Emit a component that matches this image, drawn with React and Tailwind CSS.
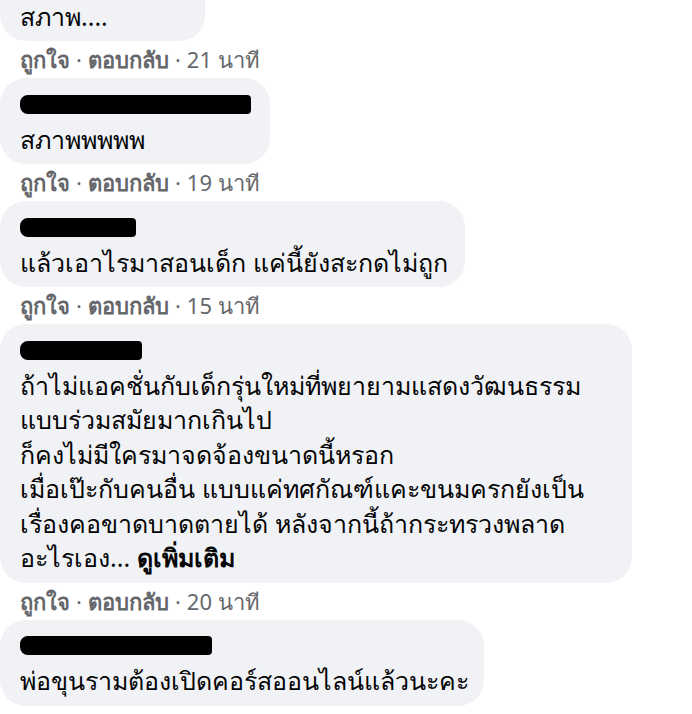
const comments = [
  { width: "w-[205px]", bar: "w-[180px]", lines: ["สภาพ...."], time: "21 นาที" },
  { width: "w-[270px]", bar: "w-[231px]", lines: ["สภาพพพพพ"], time: "19 นาที" },
  { width: "w-[465px]", bar: "w-[116px]", lines: ["แล้วเอาไรมาสอนเด็ก แค่นี้ยังสะกดไม่ถูก"], time: "15 นาที" },
  {
    width: "w-[632px]",
    bar: "w-[122px]",
    lines: [
      "ถ้าไม่แอคชั่นกับเด็กรุ่นใหม่ที่พยายามแสดงวัฒนธรรม",
      "แบบร่วมสมัยมากเกินไป",
      "ก็คงไม่มีใครมาจดจ้องขนาดนี้หรอก",
      "เมื่อเป๊ะกับคนอื่น แบบแค่ทศกัณฑ์แคะขนมครกยังเป็น",
      "เรื่องคอขาดบาดตายได้ หลังจากนี้ถ้ากระทรวงพลาด",
    ],
    more: "อะไรเอง... ",
    time: "20 นาที",
  },
  { width: "w-[484px]", bar: "w-[192px]", lines: ["พ่อขุนรามต้องเปิดคอร์สออนไลน์แล้วนะคะ"] },
];

function Bubble({ c }) {
  return (
    <div className={`${c.width} rounded-[26px] bg-[#f0f2f5] pl-[20px] pr-4 pt-[9px] pb-[8px] text-[25px] leading-[34.5px] text-[#050505]`}>
      <div className="flex h-[34.5px] items-center">
        <div className={`${c.bar} h-[19px] rounded-[4px] rounded-l-[8px] bg-black`} />
      </div>
      {c.lines.map((line) => (
        <div key={line} className="whitespace-nowrap">{line}</div>
      ))}
      {c.more && (
        <div className="whitespace-nowrap">
          {c.more}
          <span className="font-bold">ดูเพิ่มเติม</span>
        </div>
      )}
    </div>
  );
}

function Meta({ time }) {
  return (
    <div className="flex h-[37px] items-center pl-[20px] text-[22px] text-[#65676b]">
      <span className="font-bold">ถูกใจ</span>
      <span className="px-[6px]">·</span>
      <span className="font-bold">ตอบกลับ</span>
      <span className="px-[6px]">·</span>
      <span>{time}</span>
    </div>
  );
}

export default function App() {
  return (
    <div
      className="h-[714px] w-[692px] overflow-hidden bg-white"
      style={{ fontFamily: '"Segoe UI", Tahoma, "Noto Sans", "Liberation Sans", sans-serif' }}
    >
      <div className="-mt-[45px]">
        {comments.map((c, i) => (
          <div key={i}>
            <Bubble c={c} />
            {c.time && <Meta time={c.time} />}
          </div>
        ))}
      </div>
    </div>
  );
}
